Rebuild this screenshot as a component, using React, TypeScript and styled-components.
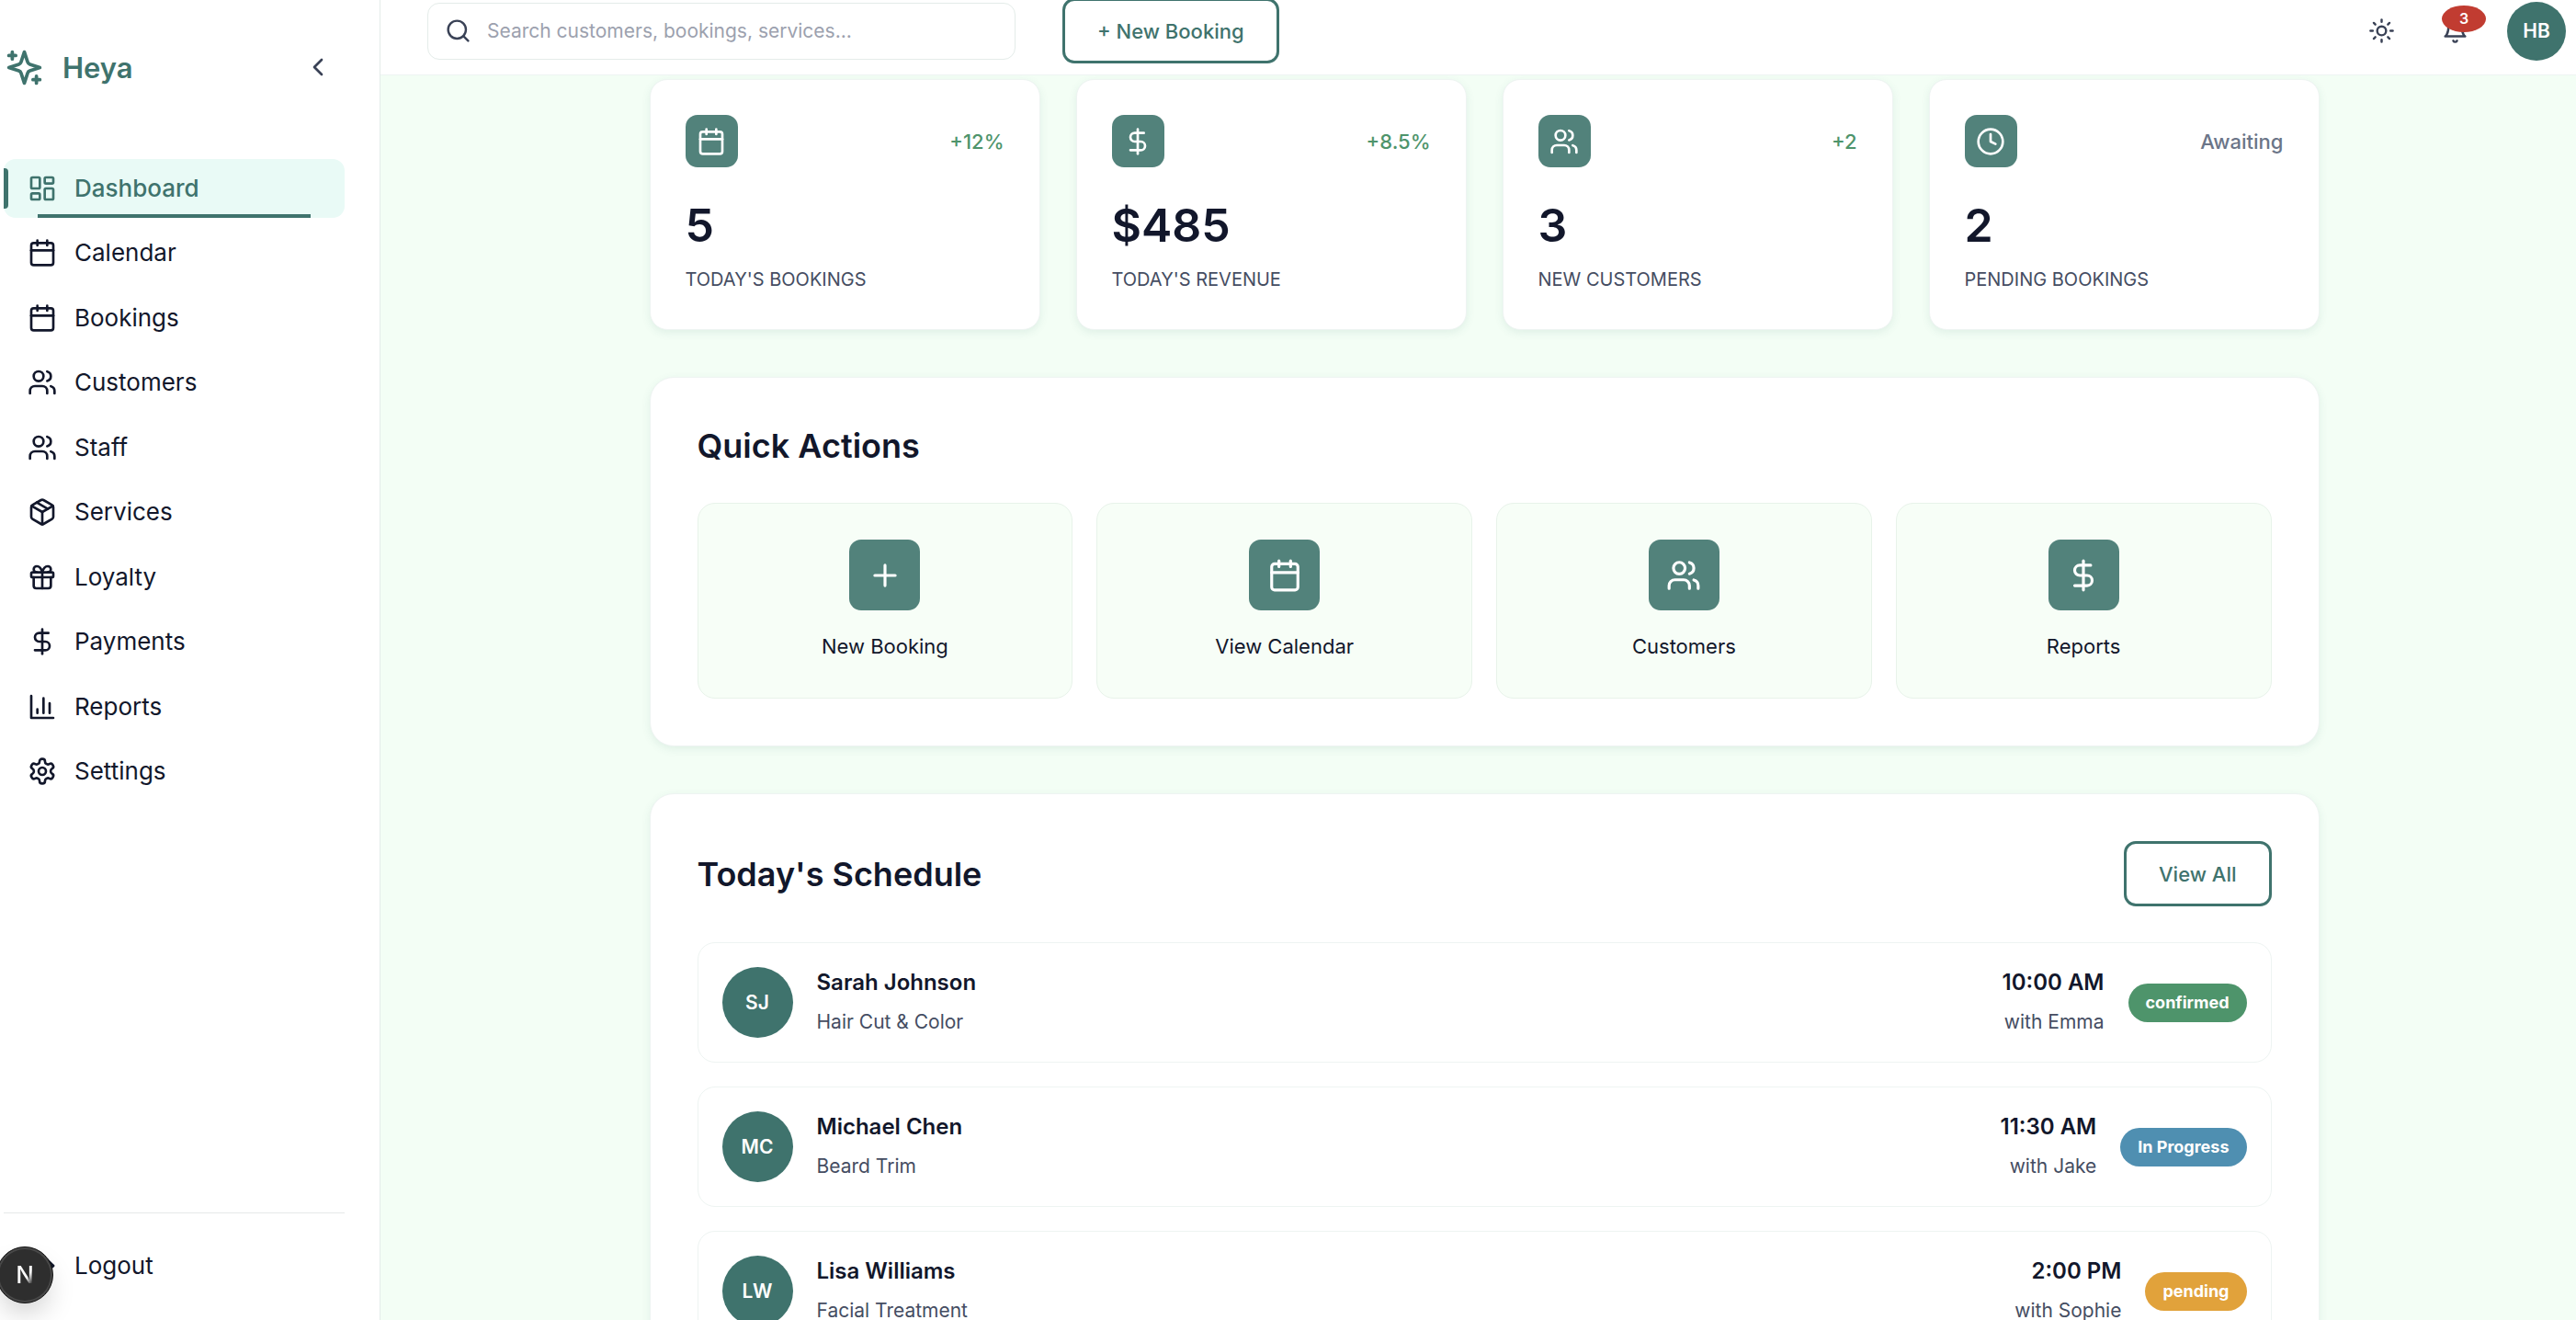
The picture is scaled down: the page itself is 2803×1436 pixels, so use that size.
import React from "react";
import styled, { createGlobalStyle, css } from "styled-components";
import {
  Calendar,
  ChevronLeft,
  Clock,
  DollarSign,
  Gift,
  LayoutDashboard,
  LogOut,
  Package,
  Plus,
  Search,
  Sun,
  Users,
} from "lucide-react";

const color = {
  teal: "#3f736d",
  tile: "#52827b",
  ink: "#12172b",
  slate: "#454d62",
  muted: "#6b7588",
  page: "#f3fef5",
  mint: "#e9faf6",
  line: "#e4ece9",
  soft: "#eef4f2",
  green: "#4e946b",
  blue: "#4f8fb1",
  amber: "#e1a23b",
  red: "#c13c31",
};

const GlobalStyle = createGlobalStyle`
  *, *::before, *::after { box-sizing: border-box; }
  body {
    margin: 0;
    background: ${color.page};
    color: ${color.ink};
    font-family: Inter, "Liberation Sans", sans-serif;
    font-size: 22px;
    overflow: hidden;
  }
  button, input { font: inherit; color: inherit; }
  h2, p, ul { margin: 0; padding: 0; }
  ul { list-style: none; }
`;

/* ---------- icons ---------- */

const Stroke = styled.svg`
  fill: none;
  stroke: currentColor;
  stroke-width: 2;
  stroke-linecap: round;
  stroke-linejoin: round;
  flex: none;
`;

type IconProps = { size?: number };

const SparklesIcon = ({ size = 24 }: IconProps) => (
  <Stroke width={size} height={size} viewBox="0 0 24 24" aria-hidden="true">
    <path d="m12 3-1.912 5.813a2 2 0 0 1-1.275 1.275L3 12l5.813 1.912a2 2 0 0 1 1.275 1.275L12 21l1.912-5.813a2 2 0 0 1 1.275-1.275L21 12l-5.813-1.912a2 2 0 0 1-1.275-1.275L12 3Z" />
    <path d="M5 3v4M19 17v4M3 5h4M17 19h4" />
  </Stroke>
);

const BellIcon = ({ size = 24 }: IconProps) => (
  <Stroke width={size} height={size} viewBox="0 0 24 24" aria-hidden="true">
    <path d="M6 8a6 6 0 0 1 12 0c0 7 3 9 3 9H3s3-2 3-9" />
    <path d="M10.3 21a1.94 1.94 0 0 0 3.4 0" />
  </Stroke>
);

const BarsIcon = ({ size = 24 }: IconProps) => (
  <Stroke width={size} height={size} viewBox="0 0 24 24" aria-hidden="true">
    <path d="M3 3v18h18M18 17V9M13 17V5M8 17v-3" />
  </Stroke>
);

const GearIcon = ({ size = 24 }: IconProps) => (
  <Stroke width={size} height={size} viewBox="0 0 24 24" aria-hidden="true">
    <path d="M12.22 2h-.44a2 2 0 0 0-2 2v.18a2 2 0 0 1-1 1.73l-.43.25a2 2 0 0 1-2 0l-.15-.08a2 2 0 0 0-2.73.73l-.22.38a2 2 0 0 0 .73 2.73l.15.1a2 2 0 0 1 1 1.72v.51a2 2 0 0 1-1 1.74l-.15.09a2 2 0 0 0-.73 2.73l.22.38a2 2 0 0 0 2.73.73l.15-.08a2 2 0 0 1 2 0l.43.25a2 2 0 0 1 1 1.73V20a2 2 0 0 0 2 2h.44a2 2 0 0 0 2-2v-.18a2 2 0 0 1 1-1.73l.43-.25a2 2 0 0 1 2 0l.15.08a2 2 0 0 0 2.73-.73l.22-.39a2 2 0 0 0-.73-2.73l-.15-.08a2 2 0 0 1-1-1.74v-.5a2 2 0 0 1 1-1.74l.15-.09a2 2 0 0 0 .73-2.73l-.22-.38a2 2 0 0 0-2.73-.73l-.15.08a2 2 0 0 1-2 0l-.43-.25a2 2 0 0 1-1-1.73V4a2 2 0 0 0-2-2z" />
    <circle cx="12" cy="12" r="3" />
  </Stroke>
);

/* ---------- shell ---------- */

const Shell = styled.div`
  display: grid;
  grid-template-columns: 414px minmax(0, 1fr);
  height: 100vh;
  overflow: hidden;
`;

const Sidebar = styled.aside`
  display: flex;
  flex-direction: column;
  padding: 0 38px 0 4px;
  background: #fff;
  border-right: 1px solid ${color.line};
  min-height: 0;
`;

const Brand = styled.div`
  display: flex;
  align-items: center;
  gap: 19px;
  padding: 44px 0 71px;
  color: ${color.teal};
  font-size: 31px;
  font-weight: 600;
  line-height: 57px;
`;

const IconButton = styled.button`
  display: grid;
  place-items: center;
  padding: 13px;
  border: 0;
  border-radius: 13px;
  background: none;
  color: #3a4256;
  cursor: pointer;
`;

const Collapse = styled(IconButton)`
  margin-left: auto;
`;

const NavList = styled.ul`
  display: flex;
  flex-direction: column;
  justify-content: space-between;
  min-height: 698px;
`;

const NavLink = styled.a<{ $active?: boolean }>`
  position: relative;
  display: flex;
  align-items: center;
  gap: 19px;
  height: 64px;
  padding: 0 26px;
  border-radius: 13px;
  color: ${color.ink};
  font-size: 26px;
  line-height: 38px;
  text-decoration: none;

  ${(p) =>
    p.$active &&
    css`
      background: ${color.mint};
      color: ${color.teal};
      font-weight: 500;

      &::before {
        content: "";
        position: absolute;
        left: 0;
        top: 15%;
        width: 5px;
        height: 70%;
        border-radius: 0 4px 4px 0;
        background: ${color.teal};
      }

      &::after {
        content: "";
        position: absolute;
        left: 10%;
        bottom: 0;
        width: 80%;
        height: 4px;
        background: ${color.teal};
      }
    `}
`;

const SidebarFooter = styled.div`
  margin-top: auto;
  padding: 25px 0 27px;
  border-top: 1px solid #e5e8e8;
`;

const DevBadge = styled.button`
  position: fixed;
  left: -4px;
  bottom: 18px;
  display: grid;
  place-items: center;
  width: 62px;
  height: 62px;
  padding: 0;
  border: 1px solid #171717;
  border-radius: 50%;
  background: #2e2e2e;
  box-shadow: inset 0 0 0 2px #484848, 0 16px 32px -8px rgba(0, 0, 0, 0.24);
  font-size: 26px;
  font-weight: 500;
  line-height: 1;
`;

const DevMark = styled.span`
  background: linear-gradient(125deg, #fff 60%, rgba(255, 255, 255, 0.1) 85%);
  background-clip: text;
  color: transparent;
`;

/* ---------- top bar ---------- */

const Content = styled.div`
  display: flex;
  flex-direction: column;
  min-width: 0;
  min-height: 0;
`;

const TopBar = styled.header`
  display: flex;
  align-items: center;
  flex: none;
  height: 82px;
  padding: 0 11px 14px 51px;
  background: #fff;
  border-bottom: 1px solid ${color.soft};
`;

const SearchBox = styled.label`
  display: flex;
  align-items: center;
  gap: 17px;
  width: 640px;
  height: 62px;
  padding: 0 18px;
  border: 1px solid ${color.line};
  border-radius: 13px;
  color: #3a4256;
`;

const SearchInput = styled.input`
  flex: 1;
  min-width: 0;
  padding: 0;
  border: 0;
  outline: 0;
  background: none;
  font-size: 21px;

  &::placeholder {
    color: #9ca1ae;
    opacity: 1;
  }
`;

const OutlineButton = styled.button`
  flex: none;
  height: 71px;
  padding: 0 35px;
  border: 3px solid ${color.teal};
  border-radius: 13px;
  background: #fff;
  color: ${color.teal};
  font-size: 22px;
  font-weight: 500;
  line-height: 34px;
  cursor: pointer;
`;

const Primary = styled.div`
  display: flex;
  align-items: center;
  gap: 51px;
`;

const Tools = styled.div`
  display: flex;
  align-items: center;
  gap: 25px;
  margin-left: auto;
`;

const BellButton = styled(IconButton)`
  position: relative;
`;

const Count = styled.span`
  position: absolute;
  top: 0;
  left: 13px;
  width: 48px;
  border-radius: 50%;
  background: ${color.red};
  color: #fff;
  font-size: 16px;
  font-weight: 600;
  line-height: 29px;
  text-align: center;
`;

const Avatar = styled.span<{ $size: number }>`
  display: grid;
  place-items: center;
  flex: none;
  width: ${(p) => p.$size}px;
  height: ${(p) => p.$size}px;
  border-radius: 50%;
  background: ${color.teal};
  color: #fff;
  font-size: 21px;
  font-weight: 600;
`;

const Profile = styled.button`
  margin-left: 4px;
  padding: 0;
  border: 0;
  border-radius: 50%;
  background: none;
  cursor: pointer;
`;

/* ---------- dashboard ---------- */

const Main = styled.main`
  flex: 1;
  min-height: 0;
  overflow: hidden;
  padding: 4px 0 0 13px;
`;

const Column = styled.div`
  display: flex;
  flex-direction: column;
  gap: 51px;
  max-width: 1817px;
  margin: 0 auto;
`;

const surface = css`
  background: #fff;
  border: 1px solid ${color.soft};
  box-shadow: 0 3px 10px rgba(63, 115, 109, 0.1);
`;

const Stats = styled.div`
  display: grid;
  grid-template-columns: repeat(4, minmax(0, 1fr));
  gap: 39px;
`;

const StatCard = styled.article`
  ${surface}
  padding: 38px;
  border-radius: 19px;
`;

const StatTop = styled.div`
  display: flex;
  align-items: center;
  justify-content: space-between;
  margin-bottom: 26px;
`;

const IconTile = styled.span<{ $size: number }>`
  display: grid;
  place-items: center;
  width: ${(p) => p.$size}px;
  height: ${(p) => p.$size}px;
  border-radius: 13px;
  background: ${color.tile};
  color: #fff;
`;

const Trend = styled.span<{ $neutral?: boolean }>`
  color: ${(p) => (p.$neutral ? color.muted : color.green)};
  font-size: 22px;
  font-weight: 500;
`;

const StatValue = styled.p`
  font-size: 50px;
  font-weight: 600;
  line-height: 74px;
`;

const StatLabel = styled.p`
  margin-top: 6px;
  color: ${color.slate};
  font-size: 20px;
  line-height: 32px;
  text-transform: uppercase;
`;

const Panel = styled.section`
  ${surface}
  padding: 51px;
  border-radius: 26px;
`;

const PanelHead = styled.div`
  display: flex;
  align-items: center;
  justify-content: space-between;
  margin-bottom: 39px;
`;

const PanelTitle = styled.h2`
  font-size: 36px;
  font-weight: 600;
  line-height: 46px;
`;

const Actions = styled.div`
  display: grid;
  grid-template-columns: repeat(4, minmax(0, 1fr));
  gap: 26px;
`;

const Action = styled.button`
  display: flex;
  flex-direction: column;
  align-items: center;
  gap: 22px;
  padding: 39px 26px;
  border: 1px solid #e8f3ea;
  border-radius: 19px;
  background: #f7fef7;
  font-size: 22px;
  line-height: 34px;
  cursor: pointer;
`;

const Schedule = styled.ul`
  display: flex;
  flex-direction: column;
  gap: 26px;
`;

const Booking = styled.li`
  display: flex;
  align-items: center;
  gap: 26px;
  padding: 24px 26px;
  border: 1px solid ${color.soft};
  border-radius: 19px;
`;

const Lines = styled.div<{ $end?: boolean }>`
  display: flex;
  flex-direction: column;
  gap: 5px;
  ${(p) => p.$end && "margin-left: auto; text-align: right;"}
`;

const Strong = styled.p`
  font-size: 24px;
  font-weight: 600;
  line-height: 38px;
`;

const Sub = styled.p`
  color: ${color.slate};
  font-size: 21px;
  line-height: 38px;
`;

const Status = styled.span<{ $tone: string }>`
  padding: 0 19px;
  border-radius: 26px;
  background: ${(p) => p.$tone};
  color: #fff;
  font-size: 18px;
  font-weight: 700;
  line-height: 42px;
`;

/* ---------- data ---------- */

const nav = [
  { label: "Dashboard", icon: LayoutDashboard, active: true },
  { label: "Calendar", icon: Calendar },
  { label: "Bookings", icon: Calendar },
  { label: "Customers", icon: Users },
  { label: "Staff", icon: Users },
  { label: "Services", icon: Package },
  { label: "Loyalty", icon: Gift },
  { label: "Payments", icon: DollarSign },
  { label: "Reports", icon: BarsIcon },
  { label: "Settings", icon: GearIcon },
];

const stats = [
  { label: "Today's Bookings", value: "5", trend: "+12%", icon: Calendar },
  { label: "Today's Revenue", value: "$485", trend: "+8.5%", icon: DollarSign },
  { label: "New Customers", value: "3", trend: "+2", icon: Users },
  { label: "Pending Bookings", value: "2", trend: "Awaiting", neutral: true, icon: Clock },
];

const actions = [
  { label: "New Booking", icon: Plus },
  { label: "View Calendar", icon: Calendar },
  { label: "Customers", icon: Users },
  { label: "Reports", icon: DollarSign },
];

const bookings = [
  { initials: "SJ", name: "Sarah Johnson", service: "Hair Cut & Color", time: "10:00 AM", staff: "Emma", status: "confirmed", tone: color.green },
  { initials: "MC", name: "Michael Chen", service: "Beard Trim", time: "11:30 AM", staff: "Jake", status: "In Progress", tone: color.blue },
  { initials: "LW", name: "Lisa Williams", service: "Facial Treatment", time: "2:00 PM", staff: "Sophie", status: "pending", tone: color.amber },
];

export default function App() {
  return (
    <>
      <GlobalStyle />
      <Shell>
        <Sidebar>
          <Brand>
            <SparklesIcon size={45} />
            <span>Heya</span>
            <Collapse aria-label="Collapse sidebar">
              <ChevronLeft size={32} />
            </Collapse>
          </Brand>
          <nav aria-label="Main">
            <NavList>
              {nav.map(({ label, icon: Icon, active }) => (
                <li key={label}>
                  <NavLink href="#" $active={active} aria-current={active ? "page" : undefined}>
                    <Icon size={32} />
                    {label}
                  </NavLink>
                </li>
              ))}
            </NavList>
          </nav>
          <SidebarFooter>
            <NavLink href="#">
              <LogOut size={32} />
              Logout
            </NavLink>
          </SidebarFooter>
        </Sidebar>

        <Content>
          <TopBar>
            <Primary>
              <SearchBox>
                <Search size={29} />
                <SearchInput
                  type="search"
                  aria-label="Search"
                  placeholder="Search customers, bookings, services..."
                />
              </SearchBox>
              <OutlineButton>+ New Booking</OutlineButton>
            </Primary>
            <Tools>
              <IconButton aria-label="Toggle theme">
                <Sun size={29} />
              </IconButton>
              <BellButton aria-label="Notifications">
                <BellIcon size={29} />
                <Count>3</Count>
              </BellButton>
              <Profile aria-label="Account">
                <Avatar $size={64}>HB</Avatar>
              </Profile>
            </Tools>
          </TopBar>

          <Main>
            <Column>
              <Stats>
                {stats.map(({ label, value, trend, neutral, icon: Icon }) => (
                  <StatCard key={label}>
                    <StatTop>
                      <IconTile $size={57}>
                        <Icon size={32} />
                      </IconTile>
                      <Trend $neutral={neutral}>{trend}</Trend>
                    </StatTop>
                    <StatValue>{value}</StatValue>
                    <StatLabel>{label}</StatLabel>
                  </StatCard>
                ))}
              </Stats>

              <Panel>
                <PanelHead>
                  <PanelTitle>Quick Actions</PanelTitle>
                </PanelHead>
                <Actions>
                  {actions.map(({ label, icon: Icon }) => (
                    <Action key={label}>
                      <IconTile $size={77}>
                        <Icon size={38} />
                      </IconTile>
                      {label}
                    </Action>
                  ))}
                </Actions>
              </Panel>

              <Panel>
                <PanelHead>
                  <PanelTitle>Today's Schedule</PanelTitle>
                  <OutlineButton>View All</OutlineButton>
                </PanelHead>
                <Schedule>
                  {bookings.map((b) => (
                    <Booking key={b.initials}>
                      <Avatar $size={77}>{b.initials}</Avatar>
                      <Lines>
                        <Strong>{b.name}</Strong>
                        <Sub>{b.service}</Sub>
                      </Lines>
                      <Lines $end>
                        <Strong>{b.time}</Strong>
                        <Sub>with {b.staff}</Sub>
                      </Lines>
                      <Status $tone={b.tone}>{b.status}</Status>
                    </Booking>
                  ))}
                </Schedule>
              </Panel>
            </Column>
          </Main>
        </Content>
      </Shell>
      <DevBadge aria-label="Open developer tools">
        <DevMark>N</DevMark>
      </DevBadge>
    </>
  );
}
